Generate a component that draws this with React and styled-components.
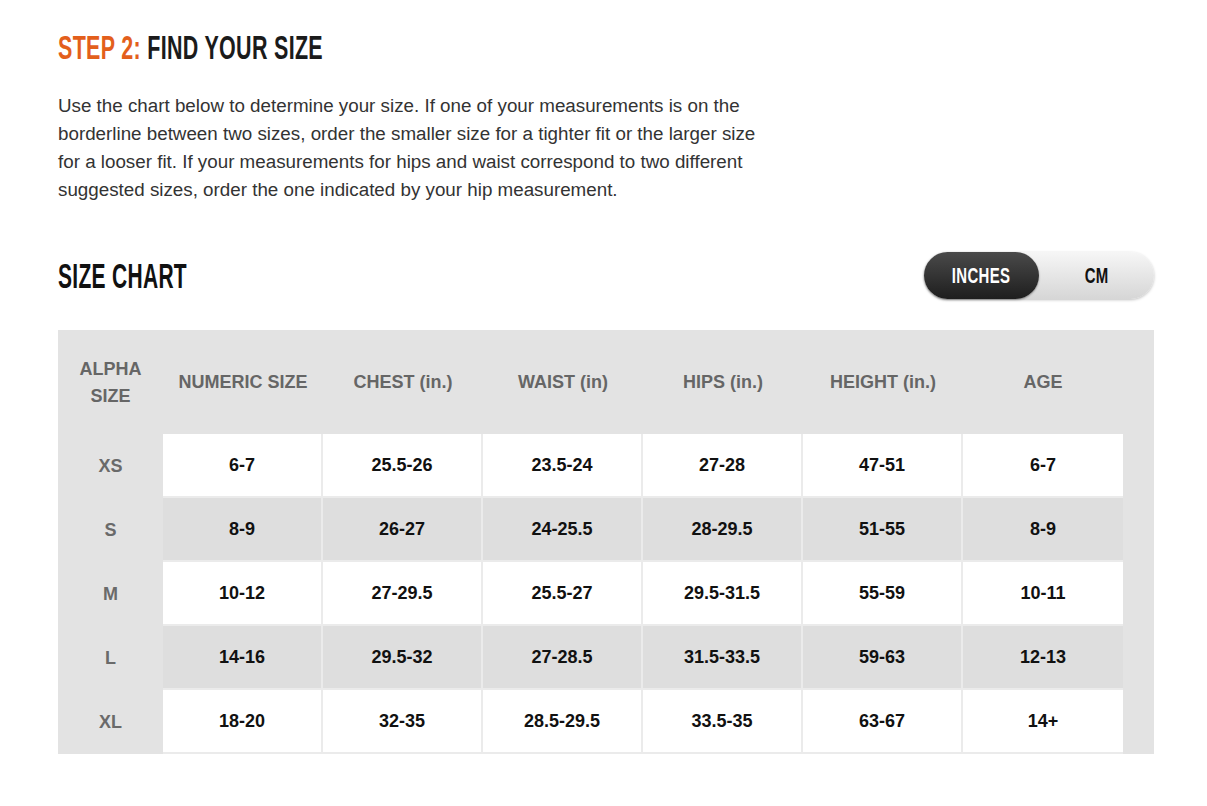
import React from "react";
import styled, { createGlobalStyle } from "styled-components";

const GlobalStyle = createGlobalStyle`
  body {
    margin: 0;
    background: #ffffff;
    font-family: "Liberation Sans", Arial, sans-serif;
  }
`;

const Page = styled.div`
  width: 1207px;
  padding: 28px 53px 40px 58px;
  box-sizing: border-box;
`;

// condensed display type: no narrow face installed, so squeeze Liberation Sans
const Condensed = styled.span`
  display: inline-block;
  font-family: "Liberation Sans", Arial, sans-serif;
  font-weight: 700;
  white-space: nowrap;
  letter-spacing: 0.5px;
  transform: scaleX(${(p) => p.$squeeze || 0.68});
  transform-origin: ${(p) => (p.$center ? "center" : "left")};
`;

const Title = styled.h1`
  margin: 0;
  font-size: 33px;
  line-height: 40px;
  color: #1b1b1b;
`;

const Accent = styled.span`
  color: #e35f1c;
`;

const Intro = styled.p`
  margin: 24px 0 0;
  width: 705px;
  font-size: 18.8px;
  line-height: 28px;
  color: #333333;
`;

const ChartHead = styled.div`
  display: flex;
  align-items: center;
  justify-content: space-between;
  margin-top: 48px;
`;

const ChartTitle = styled.h2`
  margin: 0;
  font-size: 35px;
  line-height: 44px;
  color: #111111;
`;

const Toggle = styled.div`
  display: flex;
  width: 230px;
  height: 47px;
  border-radius: 24px;
  background: linear-gradient(#f6f6f6, #d6d6d6);
  box-shadow: 0 1px 3px rgba(0, 0, 0, 0.25);
`;

const ToggleOption = styled.div`
  display: flex;
  align-items: center;
  justify-content: center;
  width: 115px;
  height: 100%;
  border-radius: 24px;
  font-size: 22px;
  color: ${(p) => (p.$active ? "#ffffff" : "#111111")};
  background: ${(p) => (p.$active ? "linear-gradient(#4a4a4a, #1e1e1e)" : "transparent")};
  box-shadow: ${(p) => (p.$active ? "0 1px 2px rgba(0,0,0,0.4)" : "none")};
`;

const Table = styled.div`
  margin-top: 31px;
  width: 1096px;
  padding-right: 31px;
  box-sizing: border-box;
  background: #e3e3e3;
`;

const Row = styled.div`
  display: grid;
  grid-template-columns: 105px repeat(6, 160px);
  height: ${(p) => (p.$head ? "104px" : "64px")};
`;

const HeadCell = styled.div`
  display: flex;
  align-items: center;
  justify-content: center;
  text-align: center;
  font-weight: 700;
  font-size: 18px;
  line-height: 27px;
  color: #666666;
  padding-top: ${(p) => (p.$alpha ? "2px" : "0")};
`;

const AlphaCell = styled.div`
  display: flex;
  align-items: center;
  justify-content: center;
  font-weight: 700;
  font-size: 18px;
  color: #6a6a6a;
`;

const Cell = styled.div`
  display: flex;
  align-items: center;
  justify-content: center;
  font-weight: 700;
  font-size: 18px;
  color: #111111;
  background: ${(p) => (p.$shade ? "#dedede" : "#ffffff")};
  border-right: ${(p) => (p.$last ? "none" : "2px solid #ebebeb")};
  border-bottom: 2px solid #ebebeb;
`;

const headers = ["NUMERIC SIZE", "CHEST (in.)", "WAIST (in)", "HIPS (in.)", "HEIGHT (in.)", "AGE"];

const rows = [
  ["XS", "6-7", "25.5-26", "23.5-24", "27-28", "47-51", "6-7"],
  ["S", "8-9", "26-27", "24-25.5", "28-29.5", "51-55", "8-9"],
  ["M", "10-12", "27-29.5", "25.5-27", "29.5-31.5", "55-59", "10-11"],
  ["L", "14-16", "29.5-32", "27-28.5", "31.5-33.5", "59-63", "12-13"],
  ["XL", "18-20", "32-35", "28.5-29.5", "33.5-35", "63-67", "14+"],
];

export default function App() {
  return (
    <Page>
      <GlobalStyle />
      <Title>
        <Condensed $squeeze={0.65}>
          <Accent>STEP 2:</Accent> FIND YOUR SIZE
        </Condensed>
      </Title>
      <Intro>
        Use the chart below to determine your size. If one of your measurements is on the
        borderline between two sizes, order the smaller size for a tighter fit or the larger size
        for a looser fit. If your measurements for hips and waist correspond to two different
        suggested sizes, order the one indicated by your hip measurement.
      </Intro>
      <ChartHead>
        <ChartTitle>
          <Condensed $squeeze={0.6}>SIZE CHART</Condensed>
        </ChartTitle>
        <Toggle>
          <ToggleOption $active>
            <Condensed $squeeze={0.68} $center>INCHES</Condensed>
          </ToggleOption>
          <ToggleOption>
            <Condensed $squeeze={0.68} $center>CM</Condensed>
          </ToggleOption>
        </Toggle>
      </ChartHead>
      <Table>
        <Row $head>
          <HeadCell $alpha>
            ALPHA
            <br />
            SIZE
          </HeadCell>
          {headers.map((h) => (
            <HeadCell key={h}>{h}</HeadCell>
          ))}
        </Row>
        {rows.map(([alpha, ...vals], i) => (
          <Row key={alpha}>
            <AlphaCell>{alpha}</AlphaCell>
            {vals.map((v, j) => (
              <Cell key={j} $shade={i % 2 === 1} $last={j === vals.length - 1}>
                {v}
              </Cell>
            ))}
          </Row>
        ))}
      </Table>
    </Page>
  );
}
